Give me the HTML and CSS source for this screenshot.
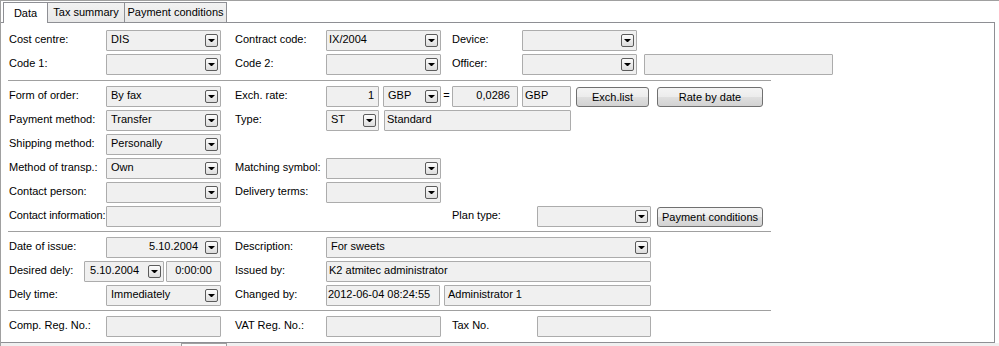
FILE: index.html
```html
<!DOCTYPE html>
<html lang="en">

<head>
  <meta charset="UTF-8">
  <title>Order - Data</title>
  <link rel="stylesheet" href="styles.css">
</head>

<body>
  <div class="window">
    <div class="tabs">
      <span class="tab-edge"></span>
      <span class="tab active">Data</span>
      <span class="tab tab-tax">Tax summary</span>
      <span class="tab tab-pay">Payment conditions</span>
      <span class="tab-fill"></span>
    </div>

    <div class="panel">
      <div class="section">
        <div class="row">
          <span class="lbl">Cost centre:</span>
          <span class="combo"><span class="val">DIS</span><i class="drop"></i></span>
          <span class="lbl c2">Contract code:</span>
          <span class="combo"><span class="val tight">IX/2004</span><i class="drop"></i></span>
          <span class="lbl c3">Device:</span>
          <span class="combo"><span class="val"></span><i class="drop"></i></span>
        </div>
        <div class="row">
          <span class="lbl">Code 1:</span>
          <span class="combo"><span class="val"></span><i class="drop"></i></span>
          <span class="lbl c2">Code 2:</span>
          <span class="combo"><span class="val"></span><i class="drop"></i></span>
          <span class="lbl c3">Officer:</span>
          <span class="combo"><span class="val"></span><i class="drop"></i></span>
          <span class="field officer-name"></span>
        </div>
      </div>

      <div class="sep first"></div>

      <div class="section">
        <div class="row">
          <span class="lbl">Form of order:</span>
          <span class="combo"><span class="val">By fax</span><i class="drop"></i></span>
          <span class="lbl c2">Exch. rate:</span>
          <span class="field num amount">1</span>
          <span class="combo currency"><span class="val">GBP</span><i class="drop"></i></span>
          <span class="eq">=</span>
          <span class="field num rate">0,0286</span>
          <span class="field currency-code">GBP</span>
          <span class="btn exch-list">Exch.list</span>
          <span class="btn wide">Rate by date</span>
        </div>
        <div class="row">
          <span class="lbl">Payment method:</span>
          <span class="combo"><span class="val">Transfer</span><i class="drop"></i></span>
          <span class="lbl c2">Type:</span>
          <span class="combo short"><span class="val">ST</span><i class="drop"></i></span>
          <span class="field type-name">Standard</span>
        </div>
        <div class="row">
          <span class="lbl">Shipping method:</span>
          <span class="combo"><span class="val">Personally</span><i class="drop"></i></span>
        </div>
        <div class="row">
          <span class="lbl">Method of transp.:</span>
          <span class="combo"><span class="val">Own</span><i class="drop"></i></span>
          <span class="lbl c2">Matching symbol:</span>
          <span class="combo"><span class="val"></span><i class="drop"></i></span>
        </div>
        <div class="row">
          <span class="lbl">Contact person:</span>
          <span class="combo"><span class="val"></span><i class="drop"></i></span>
          <span class="lbl c2">Delivery terms:</span>
          <span class="combo"><span class="val"></span><i class="drop"></i></span>
        </div>
        <div class="row">
          <span class="lbl squeeze">Contact information:</span>
          <span class="field"></span>
          <span class="lbl plan">Plan type:</span>
          <span class="combo right-col"><span class="val"></span><i class="drop"></i></span>
          <span class="btn wide pay-cond">Payment conditions</span>
        </div>
      </div>

      <div class="sep"></div>

      <div class="section">
        <div class="row">
          <span class="lbl">Date of issue:</span>
          <span class="combo"><span class="val date">5.10.2004</span><i class="drop"></i></span>
          <span class="lbl c2">Description:</span>
          <span class="combo long"><span class="val">For sweets</span><i class="drop"></i></span>
        </div>
        <div class="row">
          <span class="lbl narrow">Desired dely:</span>
          <span class="combo dely-date"><span class="val date">5.10.2004</span><i class="drop"></i></span>
          <span class="field time">0:00:00</span>
          <span class="lbl c2">Issued by:</span>
          <span class="field long">K2 atmitec administrator</span>
        </div>
        <div class="row">
          <span class="lbl">Dely time:</span>
          <span class="combo"><span class="val">Immediately</span><i class="drop"></i></span>
          <span class="lbl c2">Changed by:</span>
          <span class="field stamp">2012-06-04 08:24:55</span>
          <span class="field user">Administrator 1</span>
        </div>
      </div>

      <div class="sep"></div>

      <div class="section">
        <div class="row">
          <span class="lbl">Comp. Reg. No.:</span>
          <span class="field"></span>
          <span class="lbl c2">VAT Reg. No.:</span>
          <span class="field"></span>
          <span class="lbl c3 tax">Tax No.</span>
          <span class="field right-col"></span>
        </div>
      </div>
    </div>

    <div class="status"><span class="stub"></span></div>
  </div>
</body>

</html>
```

FILE: styles.css
```css
body {
  margin: 0;
  background-color: white;
  font-family: 'Liberation Sans', Arial, sans-serif;
  font-size: 11px;
  color: black;
}

.window {
  width: 999px;
  height: 346px;
  box-sizing: border-box;
  border-top: 1px solid #a0a0a0;
  border-left: 1px solid #a0a0a0;
  overflow: hidden;
}

/* tab strip */
.tabs {
  display: flex;
  align-items: flex-end;
  width: 994px;
  height: 22px;
}

.tab-edge {
  width: 2px;
  border-bottom: 1px solid #8e8f94;
}

.tab {
  height: 17px;
  padding-top: 2px;
  line-height: 15px;
  box-sizing: content-box;
  text-align: center;
  border: 1px solid #8e8f94;
  border-right: none;
  background: linear-gradient(#f2f2f2, #e8e8e8);
  white-space: nowrap;
}

.tab.active {
  width: 43px;
  height: 20px;
  padding: 0;
  line-height: 20px;
  border-bottom: none;
  background: white;
}

.tab-tax {
  width: 76px;
}

.tab-pay {
  width: 101px;
  border-right: 1px solid #8e8f94;
}

.tab-fill {
  flex: 1;
  border-bottom: 1px solid #8e8f94;
}

/* panel */
.panel {
  width: 994px;
  height: 320px;
  box-sizing: border-box;
  padding: 7px 0 5px 8px;
  border-right: 1px solid #8e8f94;
  border-bottom: 1px solid #8e8f94;
}

.section {
  display: flex;
  flex-direction: column;
  gap: 3px;
}

.sep {
  width: 763px;
  height: 1px;
  margin: 4px 0 5px -1px;
  background-color: #a0a0a0;
}

.sep.first {
  margin-top: 5px;
}

.row {
  display: flex;
  align-items: flex-start;
  height: 21px;
}

.lbl {
  width: 97px;
  line-height: 19px;
  white-space: nowrap;
  flex-shrink: 0;
}

.lbl.squeeze {
  letter-spacing: -0.1px;
}

.lbl.narrow {
  width: 75px;
}

.lbl.c2 {
  margin-left: 14px;
  width: 91px;
}

.lbl.c3 {
  margin-left: 11px;
  width: 70px;
}

.lbl.c3.tax {
  width: 85px;
}

.lbl.plan {
  margin-left: 231px;
  width: 85px;
}

/* inputs */
.combo,
.field {
  width: 115px;
  height: 21px;
  box-sizing: border-box;
  border: 1px solid #acacac;
  border-radius: 1px;
  background-color: #f0f0f0;
  flex-shrink: 0;
  white-space: nowrap;
  overflow: hidden;
}

.combo {
  display: flex;
  align-items: center;
}

.combo .val {
  flex: 1;
  align-self: flex-start;
  padding-left: 4px;
  line-height: 17px;
  overflow: hidden;
}

.combo .val.tight {
  padding-left: 2px;
}

.combo .val.date {
  text-align: right;
  padding-right: 7px;
}

.dely-date .val.date {
  padding-right: 9px;
}

.drop {
  width: 13px;
  height: 13px;
  margin-right: 2px;
  box-sizing: border-box;
  border: 1px solid #5b5b5b;
  border-radius: 2px;
  background: linear-gradient(#fcfcfc, #dcdcdc);
  display: flex;
  align-items: center;
  justify-content: center;
}

.drop::after {
  content: "";
  width: 1px;
  height: 0;
  border-left: 3px solid transparent;
  border-right: 3px solid transparent;
  border-top: 3px solid black;
}

.field {
  padding: 0 2px;
  line-height: 17px;
}

.field.num {
  text-align: right;
  padding-right: 4px;
}

.field.rate {
  width: 66px;
  padding-right: 7px;
}

.field.amount {
  width: 53px;
}

.combo.currency {
  width: 58px;
  margin-left: 4px;
}

.eq {
  width: 11px;
  line-height: 19px;
  text-align: center;
}

.field.currency-code {
  width: 49px;
  margin-left: 4px;
}

.combo.short {
  width: 53px;
}

.field.type-name {
  width: 187px;
  margin-left: 5px;
}

.field.officer-name {
  width: 189px;
  margin-left: 7px;
}

.combo.right-col,
.field.right-col {
  width: 114px;
}

.combo.long,
.field.long {
  width: 325px;
}

.combo.dely-date {
  width: 80px;
}

.field.time {
  width: 55px;
  margin-left: 2px;
  text-align: center;
}

.field.stamp {
  width: 114px;
  padding-left: 1px;
}

.field.user {
  width: 207px;
  margin-left: 4px;
  padding-left: 3px;
}

/* buttons */
.btn {
  height: 20px;
  margin-top: 1px;
  box-sizing: border-box;
  border: 1px solid #707070;
  border-radius: 3px;
  background: linear-gradient(#f4f4f4 0%, #ececec 50%, #dfdfdf 51%, #d2d2d2 100%);
  line-height: 18px;
  text-align: center;
  white-space: nowrap;
  flex-shrink: 0;
}

.btn.exch-list {
  width: 73px;
  margin-left: 5px;
}

.btn.wide {
  width: 106px;
  margin-left: 8px;
}

.btn.pay-cond {
  margin-left: 6px;
}

/* strip under the panel */
.status {
  height: 4px;
  background-color: #f0f0f0;
}

.stub {
  display: block;
  width: 46px;
  height: 4px;
  margin-left: 180px;
  box-sizing: border-box;
  border: 1px solid #a0a0a0;
  border-bottom: none;
  background-color: #fafafa;
}
```
